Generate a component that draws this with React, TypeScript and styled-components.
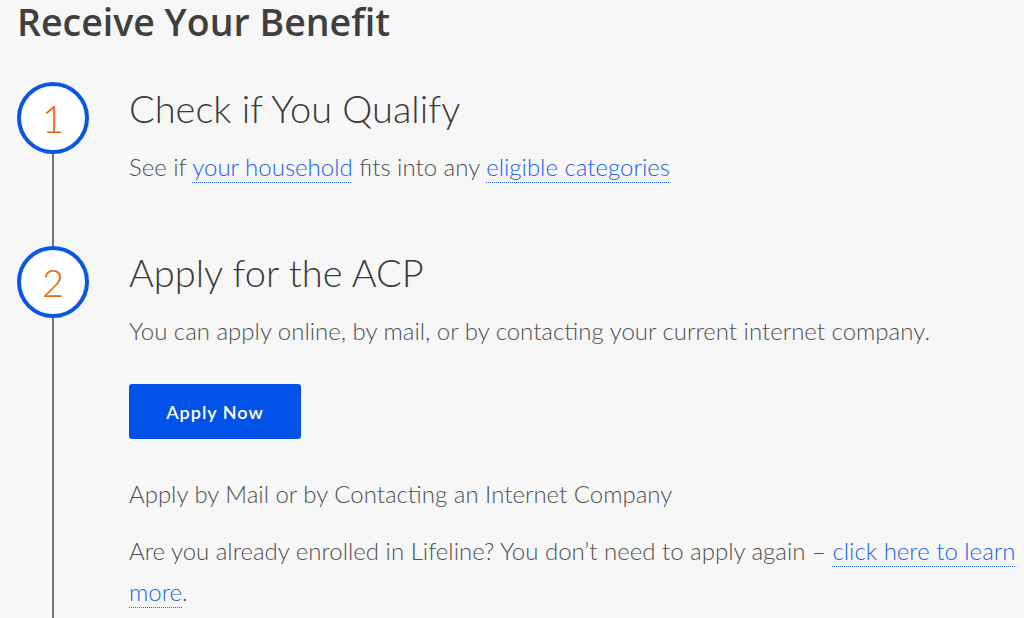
import React from "react";
import styled, { createGlobalStyle } from "styled-components";

const Global = createGlobalStyle`
  html, body { margin: 0; padding: 0; background: #f7f7f7; }
  body { font-family: "Lato", "Noto Sans", sans-serif; color: #555; overflow: hidden; }
`;

const Page = styled.div`
  padding: 2px 0 0 17px;
  width: 1024px;
  height: 618px;
  box-sizing: border-box;
  overflow: hidden;
`;

const Heading = styled.h2`
  margin: 0;
  font-family: "Open Sans", sans-serif;
  font-weight: 600;
  font-size: 37.5px;
  line-height: 40px;
  color: #3f3f3f;
`;

const Steps = styled.ol`
  list-style: none;
  margin: 40px 0 0 0;
  padding: 0;
`;

const Step = styled.li<{ $h: number }>`
  display: flex;
  gap: 40px;
  min-height: ${(p) => p.$h}px;
`;

const Rail = styled.div`
  display: flex;
  flex-direction: column;
  align-items: center;
  width: 72px;
  flex: none;
`;

const Circle = styled.div`
  width: 72px;
  height: 72px;
  box-sizing: border-box;
  border: 4px solid #0a56e6;
  border-radius: 50%;
  background: #fff;
  display: flex;
  align-items: center;
  justify-content: center;
  color: #e8680c;
  font-size: 38px;
  font-weight: 300;
  flex: none;
`;

const Line = styled.div`
  width: 2px;
  flex: 1;
  background: #767676;
`;

const Content = styled.div`
  padding-top: 3px;
  flex: 1;
`;

const Title = styled.h3`
  margin: 0;
  font-weight: 300;
  font-size: 38px;
  line-height: 46px;
  color: #3a3a3a;
`;

const Text = styled.p<{ $mt?: number }>`
  margin: ${(p) => p.$mt ?? 15}px 0 0 0;
  font-weight: 300;
  font-size: 24px;
  line-height: 41px;
  color: #4f4f4f;
`;

const Link = styled.a`
  color: #1b62e8;
  text-decoration: underline dotted #1b62e8;
  text-underline-offset: 6px;
  text-decoration-thickness: 1px;
`;

const Button = styled.button`
  display: block;
  margin-top: 33px;
  width: 172px;
  height: 55px;
  border: none;
  border-radius: 3px;
  background: #0052e8;
  color: #fff;
  font-family: "Lato", sans-serif;
  font-weight: 600;
  font-size: 18px;
  letter-spacing: 1px;
`;

export default function App() {
  return (
    <Page>
      <Global />
      <Heading>Receive Your Benefit</Heading>
      <Steps>
        <Step $h={164}>
          <Rail>
            <Circle>1</Circle>
            <Line />
          </Rail>
          <Content>
            <Title>Check if You Qualify</Title>
            <Text>
              See if <Link href="#">your household</Link> fits into any{" "}
              <Link href="#">eligible categories</Link>
            </Text>
          </Content>
        </Step>
        <Step $h={420}>
          <Rail>
            <Circle>2</Circle>
            <Line />
          </Rail>
          <Content>
            <Title>Apply for the ACP</Title>
            <Text>You can apply online, by mail, or by contacting your current internet company.</Text>
            <Button>Apply Now</Button>
            <Text $mt={34}>Apply by Mail or by Contacting an Internet Company</Text>
            <Text $mt={16}>
              Are you already enrolled in Lifeline? You don’t need to apply again –{" "}
              <Link href="#">click here to learn more</Link>.
            </Text>
          </Content>
        </Step>
      </Steps>
    </Page>
  );
}
